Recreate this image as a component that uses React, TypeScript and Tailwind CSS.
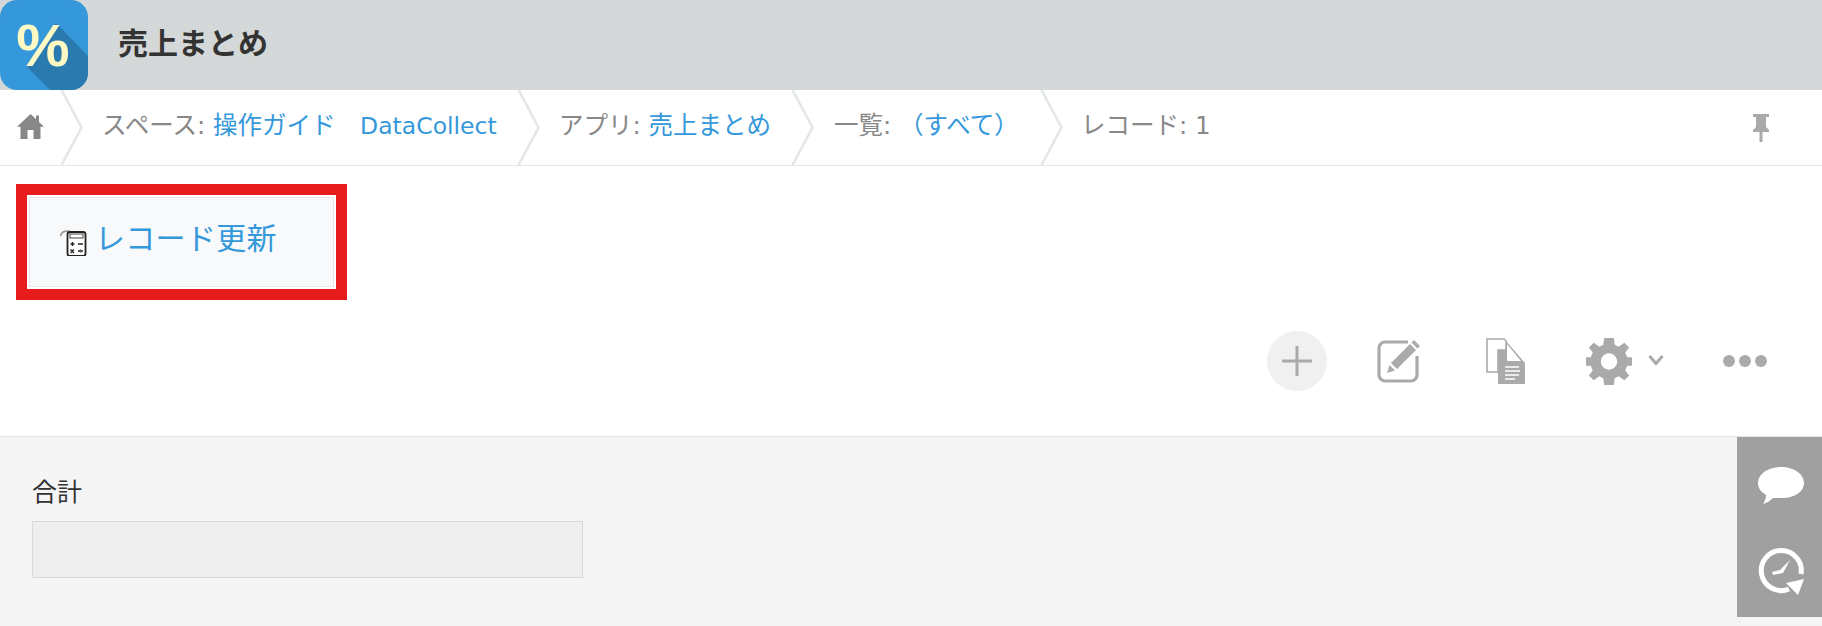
import React from 'react';

const BLUE = 'text-[#3498db]';

const Chevron = () => (
  <svg width="24" height="75" viewBox="0 0 24 75" className="shrink-0 block" fill="none">
    <path d="M1.5 0 L21.5 37.5 L1.5 75" stroke="#e3e7e8" strokeWidth="2.6" />
  </svg>
);

const Logo = () => (
  <svg width="88" height="90" viewBox="0 0 88 90" className="shrink-0 block">
    <rect x="0" y="0" width="88" height="90" rx="17" fill="#3498db" />
    <path d="M56 23 L88 56 L88 73 A17 17 0 0 1 71 90 L50 90 L27 67 Z" fill="#2a7ab0" />
    <text x="43" y="66" textAnchor="middle" fontFamily="'Liberation Sans', sans-serif" fontWeight="700" fontSize="60" fill="#fdf9c4">%</text>
  </svg>
);

const App: React.FC = () => {
  return (
    <div className="w-[1822px] h-[626px] overflow-hidden bg-white flex flex-col font-['DejaVu_Sans','Noto_Sans_CJK_JP',sans-serif]">
      <div className="h-[90px] shrink-0 bg-[#d4d8d9] flex items-center">
        <Logo />
        <div className="ml-[30px] -mt-[3px] text-[30px] font-bold text-[#333333] leading-none">売上まとめ</div>
      </div>

      <div className="h-[76px] shrink-0 border-b border-[#e3e7e8] flex items-start text-[24.5px] font-normal text-[#888888] leading-[72px]">
        <div className="w-[60px] h-[75px] shrink-0 flex items-center justify-center">
          <svg width="27" height="27" viewBox="0 0 27 27" fill="#888888" className="-mt-[2px]">
            <path d="M13.5 1 L19 6 L19 2.5 L22 2.5 L22 9 L27 13.8 L23.5 13.8 L23.5 26 L16.5 26 L16.5 17 L10.5 17 L10.5 26 L3.5 26 L3.5 13.8 L0 13.8 Z" />
          </svg>
        </div>
        <Chevron />
        <div className="w-[433px] pl-[18px] whitespace-nowrap shrink-0">
          スペース: <span className={BLUE}>操作ガイド　<span className="text-[23.5px]">DataCollect</span></span>
        </div>
        <Chevron />
        <div className="w-[250px] pl-[18px] whitespace-nowrap shrink-0">
          アプリ: <span className={BLUE}>売上まとめ</span>
        </div>
        <Chevron />
        <div className="w-[225px] pl-[19px] whitespace-nowrap shrink-0">
          一覧: <span className={BLUE}>（すべて）</span>
        </div>
        <Chevron />
        <div className="pl-[17px] whitespace-nowrap">レコード: 1</div>
        <div className="ml-auto mr-[51px] h-[75px] flex items-center">
          <svg width="20" height="30" viewBox="0 0 20 30" fill="#aaaaaa">
            <path d="M2 1 H18 V4 H15 V14 L18 17 V19 H11.5 V29 H8.5 V19 H2 V17 L5 14 V4 H2 Z" />
          </svg>
        </div>
      </div>

      <div className="h-[270px] shrink-0 flex flex-col">
        <div className="pt-[18px] pl-[16px]">
          <div className="w-[331px] h-[116px] border-[11px] border-[#e71c1c] bg-white p-[2px]">
            <div className="w-full h-full border border-[#e3e7e8] bg-[#f7f9fa] flex items-center pl-[30px] text-[30px] font-normal tracking-[0.3px] text-[#3498db] leading-none">
              <svg width="27" height="27" viewBox="0 0 27 27" fill="none" className="shrink-0 mr-[8px]">
                <path d="M0.5 7 Q2 1 10 2.5" stroke="#999999" strokeWidth="1.8" />
                <rect x="7.5" y="3" width="18" height="24" rx="2.5" stroke="#222222" strokeWidth="1.8" fill="#ffffff" />
                <rect x="10" y="5" width="13" height="4" fill="#ffffff" stroke="#444444" />
                <path d="M10.5 15 H14.5 M12.5 13 V17 M18 15 H23 M10.5 20.5 L14 24 M14 20.5 L10.5 24 M18 22 H23 M20.5 20 V20.4 M20.5 23.6 V24" stroke="#222222" strokeWidth="1.4" />
              </svg>
              <span className="-mt-[6px]">レコード更新</span>
            </div>
          </div>
        </div>
        <div className="mt-[31px] flex items-center h-[60px] text-[#aaaaaa]">
          <div className="ml-[1267px] w-[60px] h-[60px] rounded-full bg-[#f0f0f0] flex items-center justify-center shrink-0">
            <svg width="32" height="32" viewBox="0 0 32 32" stroke="#aaaaaa" strokeWidth="3">
              <path d="M16 1 V31 M1 16 H31" />
            </svg>
          </div>
          <svg width="46" height="46" viewBox="0 0 46 46" className="ml-[49px] shrink-0" fill="none">
            <path d="M32 4 H9 A6 6 0 0 0 3 10 V37 A6 6 0 0 0 9 43 H35 A6 6 0 0 0 41 37 V18" stroke="#aaaaaa" strokeWidth="3.2" />
            <path d="M38 2 L44 8 L41.5 10.5 L35.5 4.5 Z M34 6 L40 12 L21 31 L15 25 Z M13.5 27 L19 32.5 L11 35 Z" fill="#aaaaaa" />
          </svg>
          <svg width="40" height="46" viewBox="0 0 40 46" className="ml-[64px] shrink-0">
            <path d="M1 1 H18 L20 3 V12 H12 V34 H1 Z" fill="#ffffff" stroke="#aaaaaa" strokeWidth="1.6" />
            <path d="M12 12 H20 V3 L39 25 V46 H12 Z" fill="#aaaaaa" />
            <path d="M21 6 L35 23 H21 Z" fill="#ffffff" />
            <path d="M19 29 H33 M19 33 H34 M19 37 H33 M19 41 H29" stroke="#ffffff" strokeWidth="1.6" />
          </svg>
          <svg width="46" height="48" viewBox="-24 -25 48 50" className="ml-[60px] shrink-0" fill="#aaaaaa">
            <path fillRule="evenodd" d="M-5 -24 H5 L6 -17 L10 -15 L16 -19 L21 -14 L17 -9 L19 -4 L24 -4 V5 L19 5 L17 10 L21 15 L16 20 L10 16 L6 18 L5 25 H-5 L-6 18 L-10 16 L-16 20 L-21 15 L-17 10 L-19 5 L-24 5 V-4 L-19 -4 L-17 -9 L-21 -14 L-16 -19 L-10 -15 L-6 -17 Z M0 -8 A8.5 8.5 0 1 0 0.01 -8 Z" />
          </svg>
          <svg width="16" height="12" viewBox="0 0 16 12" className="ml-[16px] -mt-[2px] shrink-0" fill="none">
            <path d="M1.5 2 L8 9.5 L14.5 2" stroke="#aaaaaa" strokeWidth="3" />
          </svg>
          <div className="ml-[59px] flex gap-[4px] shrink-0">
            <div className="w-[12px] h-[12px] rounded-full bg-[#aaaaaa]" />
            <div className="w-[12px] h-[12px] rounded-full bg-[#aaaaaa]" />
            <div className="w-[12px] h-[12px] rounded-full bg-[#aaaaaa]" />
          </div>
        </div>
      </div>

      <div className="flex-1 bg-[#f5f5f5] border-t border-[#e3e3e3] flex">
        <div className="flex-1 pl-[32px] pt-[39px]">
          <div className="h-[28px] overflow-hidden text-[25px] font-normal text-[#333333] leading-[33px]">合計</div>
          <div className="mt-[17px] w-[551px] h-[57px] bg-[#eeeeee] border border-[#d8d8d8]" />
        </div>
        <div className="w-[85px] h-[180px] bg-[#a0a0a0] flex flex-col items-center shrink-0">
          <svg width="46" height="38" viewBox="0 0 46 38" className="mt-[30px] ml-[2px]" fill="#ffffff">
            <path d="M23 0 C36 0 46 7 46 16 C46 25 36 31 24 31 C20 31 17 31 15 31 C12 34 9 36 5 37 C7 34 8 31 8 28 C3 25 0 21 0 16 C0 7 10 0 23 0 Z" />
          </svg>
          <svg width="46" height="48" viewBox="0 0 46 48" className="mt-[42px] ml-[2px]" fill="none">
            <path d="M43 27 A20 20 0 1 0 31 42" stroke="#ffffff" strokeWidth="5" />
            <path d="M28 36 L46 32 L40 48 Z" fill="#ffffff" />
            <path d="M14 25 L22 23 L32 13 L25 26 L15 28 Z" fill="#ffffff" />
          </svg>
        </div>
      </div>
    </div>
  );
};

export default App;
